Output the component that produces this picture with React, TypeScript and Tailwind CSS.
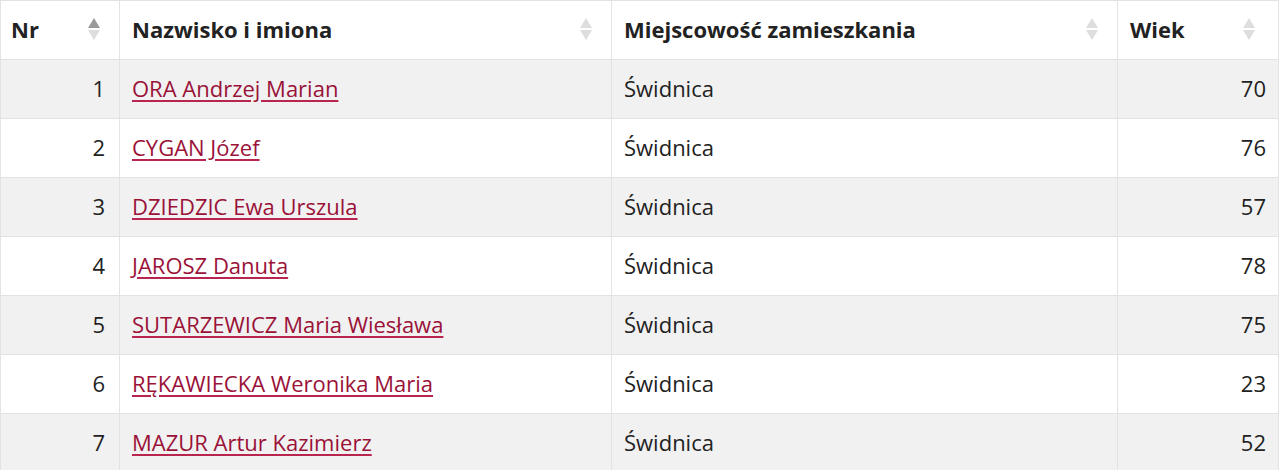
import React from 'react';

const ROWS = [
  { nr: 1, name: 'ORA Andrzej Marian', city: 'Świdnica', age: 70 },
  { nr: 2, name: 'CYGAN Józef', city: 'Świdnica', age: 76 },
  { nr: 3, name: 'DZIEDZIC Ewa Urszula', city: 'Świdnica', age: 57 },
  { nr: 4, name: 'JAROSZ Danuta', city: 'Świdnica', age: 78 },
  { nr: 5, name: 'SUTARZEWICZ Maria Wiesława', city: 'Świdnica', age: 75 },
  { nr: 6, name: 'RĘKAWIECKA Weronika Maria', city: 'Świdnica', age: 23 },
  { nr: 7, name: 'MAZUR Artur Kazimierz', city: 'Świdnica', age: 52 },
];

const SortIcon = ({ active }: { active?: boolean }) => (
  <svg width="12" height="24" viewBox="0 0 12 24" className="shrink-0">
    <path d="M6 1 L12 11 L0 11 Z" fill={active ? '#9a9a9a' : '#dedede'} />
    <path d="M0 13 L12 13 L6 23 Z" fill="#dedede" />
  </svg>
);

const Th = ({ label, active, className = '' }: any) => (
  <th className={`h-[59px] px-3 pb-[2px] border-r border-[#e3e3e3] text-left font-bold ${className}`}>
    <div className="flex items-center justify-between">
      <span>{label}</span>
      <SortIcon active={active} />
    </div>
  </th>
);

export default function App() {
  return (
    <div className="w-[1280px] h-[470px] overflow-hidden bg-white" style={{ fontFamily: '"Open Sans", sans-serif' }}>
      <table className="w-[1278px] border-collapse text-[22px] text-[#222] table-fixed border-l border-t border-[#e3e3e3]">
        <colgroup>
          <col className="w-[119px]" />
          <col className="w-[492px]" />
          <col className="w-[506px]" />
          <col className="w-[161px]" />
        </colgroup>
        <thead>
          <tr className="border-b border-[#e3e3e3]">
            <Th label="Nr" active className="pl-[10px] pr-[19px]" />
            <Th label="Nazwisko i imiona" className="pr-[19px]" />
            <Th label="Miejscowość zamieszkania" className="pr-[19px]" />
            <Th label="Wiek" className="pr-[23px]" />
          </tr>
        </thead>
        <tbody>
          {ROWS.map((r, i) => (
            <tr key={r.nr} className={`border-b border-[#e3e3e3] ${i % 2 === 0 ? 'bg-[#f1f1f1]' : 'bg-white'}`}>
              <td className="h-[59px] pl-3 pr-[14px] pb-[2px] text-right border-r border-[#e3e3e3]">{r.nr}</td>
              <td className="h-[59px] px-3 pb-[2px] border-r border-[#e3e3e3]">
                <a href="#" className="text-[#9a1238] underline decoration-[#b8264f] underline-offset-[3px]">{r.name}</a>
              </td>
              <td className="h-[59px] px-3 pb-[2px] border-r border-[#e3e3e3]">{r.city}</td>
              <td className="h-[59px] px-3 pb-[2px] text-right border-r border-[#e3e3e3]">{r.age}</td>
            </tr>
          ))}
        </tbody>
      </table>
    </div>
  );
}
